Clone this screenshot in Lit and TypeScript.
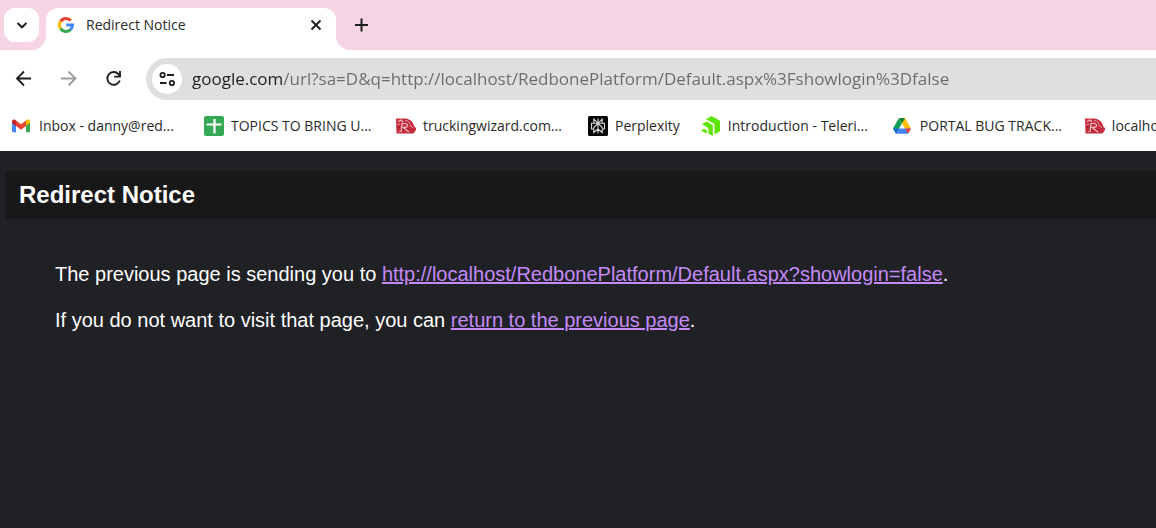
import { LitElement, html, css, svg, TemplateResult } from "lit";
import { customElement } from "lit/decorators.js";

const gmail = svg`<svg viewBox="0 0 20 20">
  <path d="M0 6v9a1.300 1.300 0 0 0 1.300 1.300H4V9z" fill="#4285f4"/>
  <path d="M14 9v7.300h2.700A1.300 1.300 0 0 0 18 15V6z" fill="#34a853"/>
  <path d="M14 5v5l4-3V5.500c0-2-2-2.700-3.200-1.700z" fill="#fbbc04"/>
  <path d="M4 10V4.500l5 3.800 5-3.800V10l-5 3.700z" fill="#ea4335"/>
  <path d="M0 5.500V7l4 3V4.500l-.8-.7C2 2.900 0 3.500 0 5.500z" fill="#c5221f"/>
</svg>`;

const sheets = svg`<svg viewBox="0 0 20 20">
  <rect width="20" height="20" rx="2" fill="#34a853"/>
  <path d="M10.500 3v14.500M2.500 8.500h15" stroke="#fff" stroke-width="2.200"/>
</svg>`;

const redbone = svg`<svg viewBox="0 0 20 20">
  <path d="M0 2.500h9c5 0 8.500 4 9 7.500l2 2.300V14l-2.500 3.500H.5z" fill="#c62d3c"/>
  <path d="M2 5.500l3-1.500 2 2M5 15.500l1-8h3.500c3 0 2.500 3.800 0 3.800H7l6 4.700" fill="none" stroke="#f0bcc0" stroke-width="1.200"/>
  <path d="M9 4.500c3 0 4.500 2 5 4.500l3 3M1.500 8.500L4 8M3 15.500h3" fill="none" stroke="#e59aa1" stroke-width="1"/>
  <path d="M1 12l3-1M13 14l-2-1M11 6l2 3" stroke="#8c1a28" stroke-width="1"/>
</svg>`;

const perplexity = svg`<svg viewBox="0 0 20 20">
  <rect width="20" height="20" rx="1.500" fill="#050505"/>
  <path d="M10 2.500v15M5.800 3v4.300h8.400V3L10 7.300zM5.800 7.300H3.500v5.700h2.300M14.200 7.300h2.300v5.700h-2.300M10 7.300l-4.200 4.200v5L10 13M10 7.300l4.200 4.200v5L10 13" fill="none" stroke="#d8d8d8" stroke-width="1.100"/>
</svg>`;

const telerik = svg`<svg viewBox="0 0 20 20">
  <path d="M5 3.200L10.600 0 19 4.800v10.400L13.500 18.500V8z" fill="#5ce500"/>
  <path d="M1 8.200L5.500 5.600l6.300 3.700V20L7.400 17.400v-5.500z" fill="#5ce500"/>
  <path d="M0 14.500l3-1.700 2.800 1.700v3.200z" fill="#5ce500"/>
</svg>`;

const drive = svg`<svg viewBox="0 0 20 20">
  <path d="M6 2L0 12.500 3 17.800 9 7.300z" fill="#0f9d58"/>
  <path d="M6 2h6l6 10.500h-6z" fill="#fbbc04"/>
  <path d="M6 2h6l-3 5.300z" fill="#188038"/>
  <path d="M3 17.800l3-5.300h12l-3 5.300z" fill="#4285f4"/>
  <path d="M12 12.500h6l-3 5.300z" fill="#ea4335"/>
  <path d="M0 12.500h6l-3 5.300z" fill="#1967d2"/>
</svg>`;

interface Bookmark {
  label: string;
  icon: TemplateResult | unknown;
}

const bookmarks: Bookmark[] = [
  { label: "Inbox - danny@red...", icon: gmail },
  { label: "TOPICS TO BRING U...", icon: sheets },
  { label: "truckingwizard.com...", icon: redbone },
  { label: "Perplexity", icon: perplexity },
  { label: "Introduction - Teleri...", icon: telerik },
  { label: "PORTAL BUG TRACK...", icon: drive },
  { label: "localhost", icon: redbone },
];

@customElement("browser-chrome")
export class BrowserChrome extends LitElement {
  static styles = css`
    :host {
      display: block;
      background: #fff;
      color: #2a2a2a;
      font-family: "Open Sans", "Noto Sans", sans-serif;
      font-size: 14px;
    }
    button {
      display: grid;
      place-items: center;
      padding: 0;
      border: 0;
      background: none;
      color: #1f1f1f;
    }
    svg { display: block; width: 20px; height: 20px; }
    .strip {
      display: flex;
      align-items: flex-start;
      height: 42px;
      padding-top: 8px;
      padding-left: 4px;
      background: #f5d5e3;
    }
    .search {
      width: 35px;
      height: 34px;
      border-radius: 11px;
      background: #fff;
    }
    .tab {
      position: relative;
      box-sizing: border-box;
      display: flex;
      align-items: center;
      width: 290px;
      height: 42px;
      margin-left: 7px;
      padding: 0 10px 8px 10px;
      border-radius: 12px 12px 0 0;
      background: #fff;
    }
    .tab::before,
    .tab::after {
      content: "";
      position: absolute;
      bottom: 0;
      width: 14px;
      height: 14px;
    }
    .tab::before {
      right: 100%;
      background: radial-gradient(circle at 0 0, transparent 14px, #fff 14px);
    }
    .tab::after {
      left: 100%;
      background: radial-gradient(circle at 100% 0, transparent 14px, #fff 14px);
    }
    .title { flex: 1; margin-left: 10px; line-height: 20px; }
    .close { width: 20px; height: 20px; }
    .new { width: 34px; height: 34px; margin-left: 8px; }
    .toolbar {
      display: flex;
      align-items: center;
      height: 58px;
      padding-left: 14px;
    }
    .nav { display: flex; gap: 25px; }
    .nav button { width: 20px; height: 20px; }
    .nav .forward { color: #9b9b9b; }
    .omnibox {
      flex: 1;
      display: flex;
      align-items: center;
      gap: 10px;
      height: 42px;
      margin-left: 22px;
      padding-left: 6px;
      border-radius: 21px 0 0 21px;
      background: #dfdfe1;
    }
    .site {
      flex: none;
      width: 30px;
      height: 30px;
      border-radius: 50%;
      background: #fff;
    }
    .url {
      flex: 1;
      min-width: 0;
      padding: 0;
      border: 0;
      outline: 0;
      font: inherit;
      font-size: 17px;
      line-height: 24px;
      color: transparent;
      background: linear-gradient(90deg, #1f1f1f 91px, #6a6a6d 91px);
      -webkit-background-clip: text;
      background-clip: text;
    }
    .bookmarks {
      display: flex;
      align-items: center;
      gap: 21px;
      height: 36px;
      padding: 0 0 7px 12px;
      overflow: hidden;
    }
    .bookmark {
      flex: none;
      display: flex;
      align-items: center;
      gap: 7px;
      color: inherit;
      text-decoration: none;
      white-space: nowrap;
    }
    .long { width: 144px; }
  `;

  render() {
    return html`
      <div class="strip">
        <button class="search" aria-label="Search tabs">
          <svg viewBox="0 0 20 20"><path d="M5.500 8l4.500 4.300L14.500 8" fill="none" stroke="currentColor" stroke-width="2"/></svg>
        </button>
        <div class="tab">
          <svg viewBox="0 0 20 20" fill="none" stroke-width="3">
            <path d="M4.600 6.400A6.500 6.500 0 0 1 14.800 5.600" stroke="#ea4335"/>
            <path d="M4.600 13.600a6.500 6.500 0 0 1 0-7.200" stroke="#fbbc04"/>
            <path d="M14.500 14.700A6.500 6.500 0 0 1 4.600 13.600" stroke="#34a853"/>
            <path d="M10.300 10h6.200a6.500 6.500 0 0 1-2 4.700" stroke="#4285f4"/>
          </svg>
          <span class="title">Redirect Notice</span>
          <button class="close" aria-label="Close tab">
            <svg viewBox="0 0 20 20"><path d="M5.500 5.500l9 9M14.500 5.500l-9 9" stroke="currentColor" stroke-width="1.900"/></svg>
          </button>
        </div>
        <button class="new" aria-label="New tab">
          <svg viewBox="0 0 20 20"><path d="M10.500 3.500v13M4 10h13" stroke="currentColor" stroke-width="2"/></svg>
        </button>
      </div>
      <div class="toolbar">
        <div class="nav">
          <button aria-label="Back">
            <svg viewBox="0 0 20 20"><path d="M17 9.500H4M10 2.500l-7 7 7 7" fill="none" stroke="currentColor" stroke-width="1.800"/></svg>
          </button>
          <button class="forward" aria-label="Forward">
            <svg viewBox="0 0 20 20"><path d="M2 9.500h13.500M9.500 2.500l7 7-7 7" fill="none" stroke="currentColor" stroke-width="1.800"/></svg>
          </button>
          <button aria-label="Reload">
            <svg viewBox="0 0 20 20"><path d="M15.800 11.500A6.400 6.400 0 1 1 14.500 5.100l1.300 2M16 2v5.600h-5.800" fill="none" stroke="currentColor" stroke-width="1.900"/></svg>
          </button>
        </div>
        <div class="omnibox">
          <button class="site" aria-label="View site information">
            <svg viewBox="0 0 20 20" fill="none" stroke="currentColor" stroke-width="1.800"><circle cx="5.600" cy="6" r="2.200"/><path d="M10 6h7M3 14h6.500"/><circle cx="14.900" cy="14" r="2.200"/></svg>
          </button>
          <input class="url" type="text" aria-label="Address" spellcheck="false"
            value="google.com/url?sa=D&q=http://localhost/RedbonePlatform/Default.aspx%3Fshowlogin%3Dfalse">
        </div>
      </div>
      <nav class="bookmarks" aria-label="Bookmarks">
        ${bookmarks.map(
          (b) => html`<a class="bookmark" href="#">${b.icon}<span class=${b.label.endsWith("...") ? "long" : "short"}>${b.label}</span></a>`
        )}
      </nav>
    `;
  }
}

@customElement("app-root")
export class AppRoot extends LitElement {
  static styles = css`
    :host {
      display: flex;
      flex-direction: column;
      min-height: 100vh;
      overflow: hidden;
      background: #202124;
      color: #fff;
      font-family: "Liberation Sans", Arial, sans-serif;
      font-size: 20px;
      line-height: 24px;
    }
    main { padding: 20px 0 0 6px; }
    h1 {
      margin: 0;
      padding: 12px 13px;
      background: #181818;
      font-size: 24px;
      line-height: 24px;
    }
    .message { padding: 43px 49px; }
    p { margin: 0 0 22px; }
    a { color: #c58af9; }
  `;

  render() {
    return html`
      <browser-chrome></browser-chrome>
      <main>
        <h1>Redirect Notice</h1>
        <div class="message">
          <p>The previous page is sending you to <a href="#">http://localhost/RedbonePlatform/Default.aspx?showlogin=false</a>.</p>
          <p>If you do not want to visit that page, you can <a href="#">return to the previous page</a>.</p>
        </div>
      </main>
    `;
  }
}
